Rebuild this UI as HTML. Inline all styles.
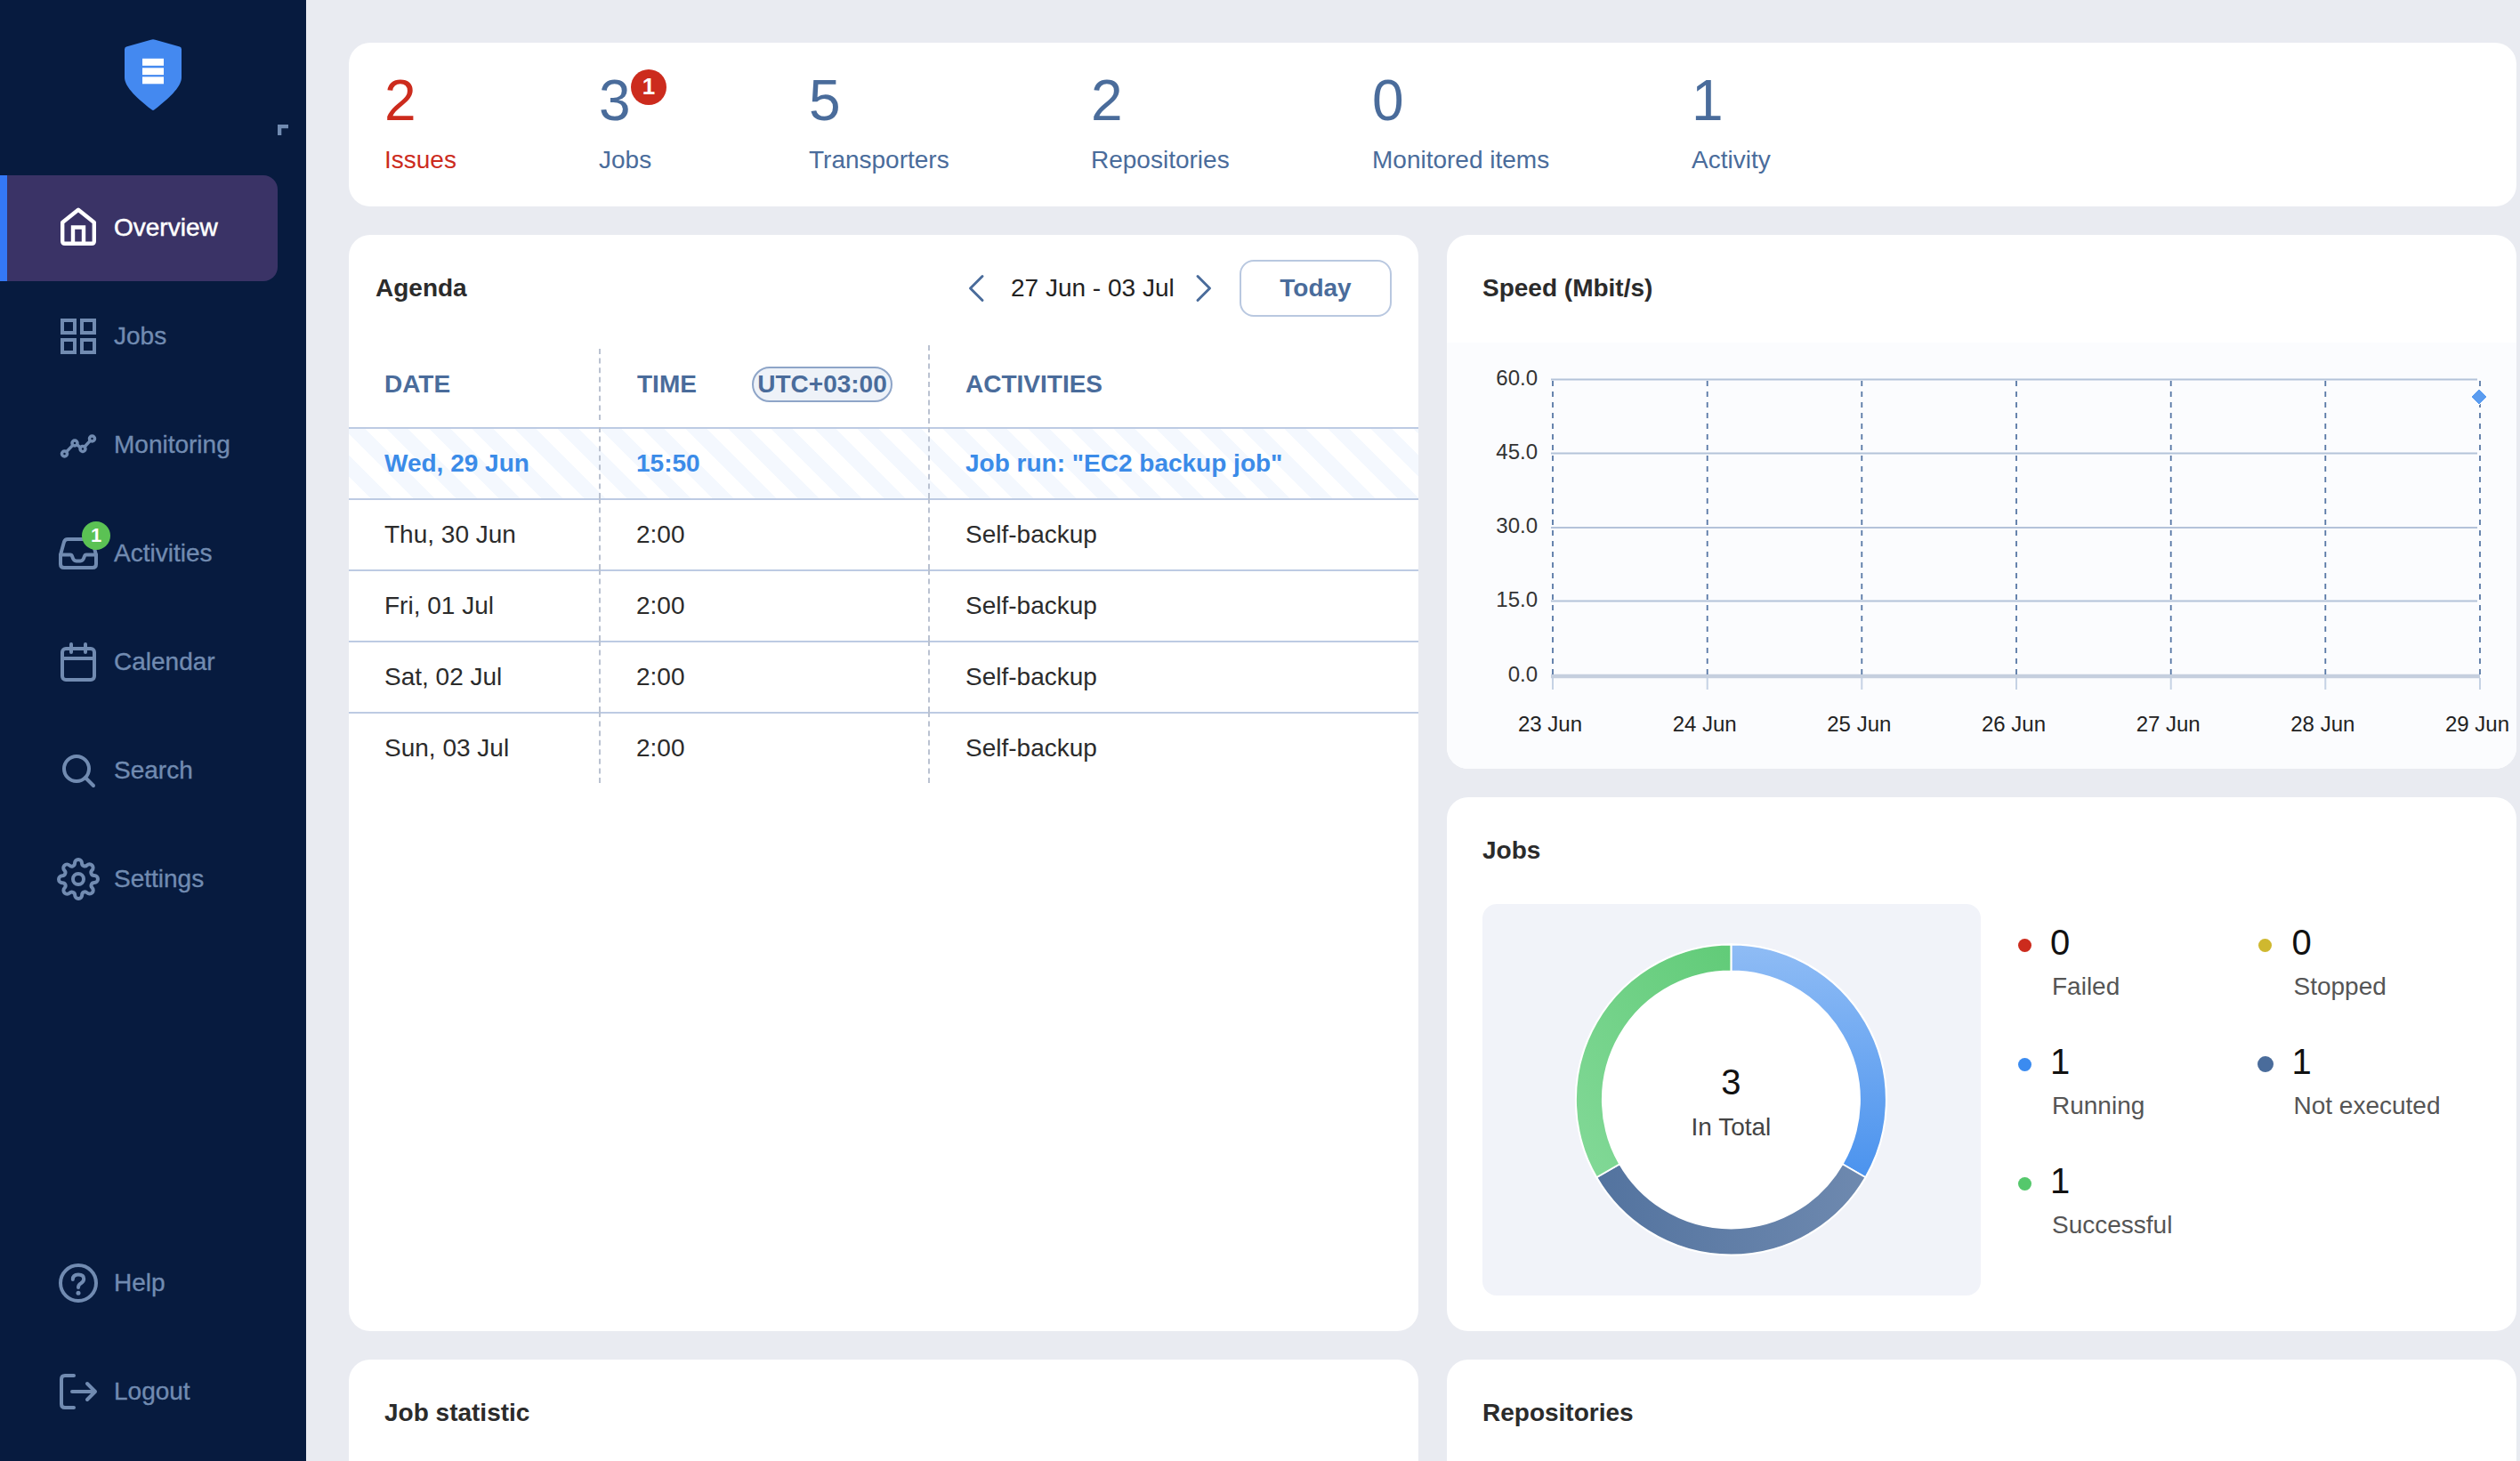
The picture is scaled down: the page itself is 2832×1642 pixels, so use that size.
<!DOCTYPE html>
<html lang="en">
<head>
<meta charset="utf-8">
<title>Overview</title>
<style>
*{box-sizing:border-box;margin:0;padding:0}
html,body{width:2832px;height:1642px;overflow:hidden}
body{background:#e9ebf1;font-family:"Liberation Sans",sans-serif;position:relative;color:#2b2b2b}
.abs{position:absolute}
.t{position:absolute;white-space:nowrap;line-height:1}
/* sidebar */
#side{position:absolute;left:0;top:0;width:344px;height:1642px;background:#071b3f}
#active{position:absolute;left:0;top:197px;width:312px;height:119px;background:#3a3366;border-radius:0 16px 16px 0}
#active:before{content:"";position:absolute;left:0;top:0;width:8px;height:100%;background:#3478f6}
.nav{position:absolute;left:128px;font-size:28px;line-height:1;color:#718bb1;white-space:nowrap;-webkit-text-stroke:0.35px #718bb1}
.nav.on{color:#fff;-webkit-text-stroke:0.5px #fff}
svg{position:absolute;overflow:visible}
.ic{fill:none;stroke:#718bb1;stroke-width:4;stroke-linecap:round;stroke-linejoin:round}
/* cards */
.card{position:absolute;background:#fff;border-radius:24px}
.h{position:absolute;font-weight:bold;font-size:28px;line-height:1;color:#2b2b2b;white-space:nowrap}
.num{position:absolute;font-size:64px;line-height:1;color:#4a6c9b;white-space:nowrap}
.lab{position:absolute;font-size:28px;line-height:1;color:#4a6c9b;white-space:nowrap}
.red{color:#cc2b1d}
.dv{position:absolute;width:0;border-left:2px dashed #bac2d1}
</style>
</head>
<body>
<!-- SIDEBAR -->
<div id="side">
  <div id="active"></div>
  <!-- logo shield -->
  <svg style="left:140px;top:44px" width="64" height="80" viewBox="0 0 64 80">
    <path d="M29.5 0.8 Q32 -0.3 34.5 0.8 L62 8.6 Q64 9.3 64 11.6 L64 43 C64 52 54 63.5 33.5 79.3 Q32 80.6 30.5 79.3 C10 63.5 0 52 0 43 L0 11.6 Q0 9.3 2 8.6 Z" fill="#4489f0"/>
    <rect x="20" y="21.8" width="24" height="8" fill="#fff"/>
    <rect x="20" y="32.3" width="24" height="7.8" fill="#fff"/>
    <rect x="20" y="42.3" width="24" height="8" fill="#fff"/>
  </svg>
  <!-- collapse corner -->
  <svg style="left:312px;top:140px" width="12" height="12" viewBox="0 0 12 12"><path d="M0 12V0H12V4.3H4.3V12Z" fill="#718bb1"/></svg>

  <!-- Overview -->
  <svg style="left:68px;top:233px" width="40" height="43" viewBox="0 0 40 43"><g class="ic" style="stroke:#fff;stroke-width:4.4">
    <path d="M2.2 17 L20 2.7 L37.8 17 V38 Q37.8 40.8 35 40.8 H5 Q2.2 40.8 2.2 38 Z"/><path d="M14 40.8 V22.5 H26 V40.8" style="stroke-linejoin:miter"/></g></svg>
  <div class="nav on" style="top:242px">Overview</div>
  <!-- Jobs -->
  <svg style="left:68px;top:358px" width="40" height="40" viewBox="0 0 40 40"><g class="ic" style="stroke-linejoin:miter">
    <rect x="2" y="2" width="14" height="14"/><rect x="24" y="2" width="14" height="14"/><rect x="2" y="24" width="14" height="14"/><rect x="24" y="24" width="14" height="14"/></g></svg>
  <div class="nav" style="top:364px">Jobs</div>
  <!-- Monitoring -->
  <svg style="left:68px;top:488px" width="40" height="27" viewBox="0 0 40 27"><g class="ic" style="stroke-width:3.5">
    <circle cx="4.5" cy="22" r="3"/><circle cx="16" cy="10" r="3"/><circle cx="25" cy="16.5" r="3"/><circle cx="35.5" cy="5" r="3"/>
    <path d="M6.8 19.6 L13.8 12.4 M18.6 11.8 L22.4 14.8 M27.2 14 L33.3 7.4"/></g></svg>
  <div class="nav" style="top:486px">Monitoring</div>
  <!-- Activities -->
  <svg style="left:66px;top:604px" width="44" height="36" viewBox="0 0 44 36"><g class="ic">
    <path d="M2 19.5 L6 5 Q7 2 10 2 H34 Q37 2 38 5 L42 19.5 V30 Q42 34 38 34 H6 Q2 34 2 30 Z"/>
    <path d="M2 19.5 H13 Q14.6 19.5 15.2 21.5 Q16.6 26.5 19.8 26.5 H24.2 Q27.4 26.5 28.8 21.5 Q29.4 19.5 31 19.5 H42"/></g></svg>
  <div class="abs" style="left:92px;top:586px;width:32px;height:32px;border-radius:50%;background:#5bc254"></div>
  <div class="t" style="left:92px;top:591px;width:32px;text-align:center;font-size:22px;font-weight:bold;color:#fff">1</div>
  <div class="nav" style="top:608px">Activities</div>
  <!-- Calendar -->
  <svg style="left:68px;top:722px" width="40" height="44" viewBox="0 0 40 44"><g class="ic">
    <rect x="2" y="7" width="36" height="35" rx="4"/><path d="M2 18 H38 M12 2 V11 M28 2 V11"/></g></svg>
  <div class="nav" style="top:730px">Calendar</div>
  <!-- Search -->
  <svg style="left:70px;top:848px" width="37" height="37" viewBox="0 0 37 37"><g class="ic">
    <circle cx="16" cy="16" r="14"/><path d="M26 26 L35 35"/></g></svg>
  <div class="nav" style="top:852px">Search</div>
  <!-- Settings -->
  <svg style="left:64px;top:964px" width="48" height="48" viewBox="0 0 24 24"><g class="ic" style="stroke-width:2">
    <circle cx="12" cy="12" r="3"/>
    <path d="M19.4 15a1.65 1.65 0 0 0 .33 1.82l.06.06a2 2 0 1 1-2.83 2.83l-.06-.06a1.65 1.65 0 0 0-1.82-.33 1.65 1.65 0 0 0-1 1.51V21a2 2 0 0 1-4 0v-.09A1.65 1.65 0 0 0 9 19.4a1.65 1.65 0 0 0-1.82.33l-.06.06a2 2 0 1 1-2.83-2.83l.06-.06a1.65 1.65 0 0 0 .33-1.82 1.65 1.65 0 0 0-1.51-1H3a2 2 0 0 1 0-4h.09A1.65 1.65 0 0 0 4.6 9a1.65 1.65 0 0 0-.33-1.82l-.06-.06a2 2 0 1 1 2.83-2.83l.06.06a1.65 1.65 0 0 0 1.82.33H9a1.65 1.65 0 0 0 1-1.51V3a2 2 0 0 1 4 0v.09a1.65 1.65 0 0 0 1 1.51 1.65 1.65 0 0 0 1.82-.33l.06-.06a2 2 0 1 1 2.83 2.83l-.06.06a1.65 1.65 0 0 0-.33 1.82V9a1.65 1.65 0 0 0 1.51 1H21a2 2 0 0 1 0 4h-.09a1.65 1.65 0 0 0-1.51 1z"/></g></svg>
  <div class="nav" style="top:974px">Settings</div>
  <!-- Help -->
  <svg style="left:66px;top:1420px" width="44" height="44" viewBox="0 0 44 44"><g class="ic">
    <circle cx="22" cy="22" r="20"/><path d="M15.8 18 Q15.8 12.5 22 12.5 Q28.2 12.5 28.2 17.3 Q28.2 20.2 25 22.2 Q22 23.8 22 27"/></g>
    <circle cx="22" cy="33.3" r="2.5" fill="#718bb1"/></svg>
  <div class="nav" style="top:1428px">Help</div>
  <!-- Logout -->
  <svg style="left:67px;top:1544px" width="43" height="40" viewBox="0 0 43 40"><g class="ic">
    <path d="M16 2 H6 Q2 2 2 6 V34 Q2 38 6 38 H16"/><path d="M14 20 H40 M31 11 L40 20 L31 29"/></g></svg>
  <div class="nav" style="top:1550px">Logout</div>
</div>

<!-- TOP STATS -->
<div class="card" id="stats" style="left:392px;top:48px;width:2436px;height:184px">
  <div class="num red" style="left:40px;top:33px">2</div>
  <div class="lab red" style="left:40px;top:118px">Issues</div>
  <div class="num" style="left:281px;top:33px">3</div>
  <div class="lab" style="left:281px;top:118px">Jobs</div>
  <div class="num" style="left:517px;top:33px">5</div>
  <div class="lab" style="left:517px;top:118px">Transporters</div>
  <div class="num" style="left:834px;top:33px">2</div>
  <div class="lab" style="left:834px;top:118px">Repositories</div>
  <div class="num" style="left:1150px;top:33px">0</div>
  <div class="lab" style="left:1150px;top:118px">Monitored items</div>
  <div class="num" style="left:1509px;top:33px">1</div>
  <div class="lab" style="left:1509px;top:118px">Activity</div>
  <div class="abs" style="left:317px;top:30px;width:40px;height:40px;border-radius:50%;background:#cc2b1d"></div>
  <div class="t" style="left:317px;top:36px;width:40px;text-align:center;font-size:26px;font-weight:bold;color:#fff">1</div>
</div>

<!-- AGENDA -->
<div class="card" id="agenda" style="left:392px;top:264px;width:1202px;height:1232px">
  <div class="h" style="left:30px;top:46px">Agenda</div>
  <svg style="left:696px;top:45px" width="18" height="30" viewBox="0 0 18 30"><path d="M16 1.5 L2.5 15 L16 28.5" fill="none" stroke="#4a6c9b" stroke-width="3" stroke-linecap="round" stroke-linejoin="round"/></svg>
  <div class="t" style="left:744px;top:46px;font-size:28px;color:#222">27 Jun - 03 Jul</div>
  <svg style="left:952px;top:45px" width="18" height="30" viewBox="0 0 18 30"><path d="M2 1.5 L15.5 15 L2 28.5" fill="none" stroke="#4a6c9b" stroke-width="3" stroke-linecap="round" stroke-linejoin="round"/></svg>
  <div class="abs" style="left:1001px;top:28px;width:171px;height:64px;border:2px solid #b9c8e0;border-radius:16px"></div>
  <div class="t" style="left:1001px;top:46px;width:171px;text-align:center;font-size:28px;font-weight:bold;color:#4a6c9b">Today</div>
  <div class="abs" style="left:0;top:218px;width:1202px;height:78px;background:repeating-linear-gradient(45deg,#fff 0 17px,#f4f8fe 17px 34px)"></div>
  <div class="t" style="left:40px;top:154px;font-size:28px;font-weight:bold;color:#4a6c9b">DATE</div>
  <div class="t" style="left:324px;top:154px;font-size:28px;font-weight:bold;color:#4a6c9b">TIME</div>
  <div class="t" style="left:693px;top:154px;font-size:28px;font-weight:bold;color:#4a6c9b">ACTIVITIES</div>
  <div class="abs" style="left:453px;top:148px;width:158px;height:40px;border:2px solid #8ea5c8;border-radius:20px;background:#eef2f8"></div>
  <div class="t" style="left:453px;top:154px;width:158px;text-align:center;font-size:28px;font-weight:bold;color:#4a6c9b">UTC+03:00</div>
  <div class="abs" style="left:0;top:216px;width:1202px;height:2px;background:#bdcbe3"></div>
  <div class="abs" style="left:0;top:296px;width:1202px;height:2px;background:#bdcbe3"></div>
  <div class="abs" style="left:0;top:376px;width:1202px;height:2px;background:#bdcbe3"></div>
  <div class="abs" style="left:0;top:456px;width:1202px;height:2px;background:#bdcbe3"></div>
  <div class="abs" style="left:0;top:536px;width:1202px;height:2px;background:#bdcbe3"></div>
  <div class="dv" style="left:281px;top:128px;height:80px"></div>
  <div class="dv" style="left:281px;top:216px;height:80px"></div>
  <div class="dv" style="left:281px;top:296px;height:80px"></div>
  <div class="dv" style="left:281px;top:376px;height:80px"></div>
  <div class="dv" style="left:281px;top:456px;height:80px"></div>
  <div class="dv" style="left:281px;top:536px;height:80px"></div>
  <div class="dv" style="left:651px;top:124px;height:88px"></div>
  <div class="dv" style="left:651px;top:216px;height:80px"></div>
  <div class="dv" style="left:651px;top:296px;height:80px"></div>
  <div class="dv" style="left:651px;top:376px;height:80px"></div>
  <div class="dv" style="left:651px;top:456px;height:80px"></div>
  <div class="dv" style="left:651px;top:536px;height:80px"></div>
  <div class="t" style="left:40px;top:243px;font-size:28px;font-weight:bold;color:#3b8be8">Wed, 29 Jun</div>
  <div class="t" style="left:323px;top:243px;font-size:28px;font-weight:bold;color:#3b8be8">15:50</div>
  <div class="t" style="left:693px;top:243px;font-size:28px;font-weight:bold;color:#3b8be8">Job run: "EC2 backup job"</div>
  <div class="t" style="left:40px;top:323px;font-size:28px;color:#2b2b2b">Thu, 30 Jun</div>
  <div class="t" style="left:323px;top:323px;font-size:28px;color:#2b2b2b">2:00</div>
  <div class="t" style="left:693px;top:323px;font-size:28px;color:#2b2b2b">Self-backup</div>
  <div class="t" style="left:40px;top:403px;font-size:28px;color:#2b2b2b">Fri, 01 Jul</div>
  <div class="t" style="left:323px;top:403px;font-size:28px;color:#2b2b2b">2:00</div>
  <div class="t" style="left:693px;top:403px;font-size:28px;color:#2b2b2b">Self-backup</div>
  <div class="t" style="left:40px;top:483px;font-size:28px;color:#2b2b2b">Sat, 02 Jul</div>
  <div class="t" style="left:323px;top:483px;font-size:28px;color:#2b2b2b">2:00</div>
  <div class="t" style="left:693px;top:483px;font-size:28px;color:#2b2b2b">Self-backup</div>
  <div class="t" style="left:40px;top:563px;font-size:28px;color:#2b2b2b">Sun, 03 Jul</div>
  <div class="t" style="left:323px;top:563px;font-size:28px;color:#2b2b2b">2:00</div>
  <div class="t" style="left:693px;top:563px;font-size:28px;color:#2b2b2b">Self-backup</div>
</div>

<!-- SPEED -->
<div class="card" id="speed" style="left:1626px;top:264px;width:1202px;height:600px">
  <div class="h" style="left:40px;top:46px">Speed (Mbit/s)</div>
  <div class="abs" style="left:0;top:121px;width:1202px;height:479px;background:#fbfcfe;border-radius:0 0 24px 24px"></div>
  <svg style="left:0;top:0" width="1202" height="600" viewBox="1626 264 1202 600">
    <line x1="1743" y1="426.5" x2="2784" y2="426.5" stroke="#b4c3d9" stroke-width="2"/>
    <line x1="1743" y1="509.5" x2="2784" y2="509.5" stroke="#b4c3d9" stroke-width="2"/>
    <line x1="1743" y1="593" x2="2784" y2="593" stroke="#b4c3d9" stroke-width="2"/>
    <line x1="1743" y1="675.5" x2="2784" y2="675.5" stroke="#b4c3d9" stroke-width="2"/>
    <line x1="1743" y1="760" x2="2787" y2="760" stroke="#c5cfde" stroke-width="4.5"/>
    <line x1="1745.0" y1="762" x2="1745.0" y2="775" stroke="#c5d2e4" stroke-width="2"/>
    <line x1="1745.0" y1="428" x2="1745.0" y2="758" stroke="#5777a5" stroke-width="1.8" stroke-dasharray="6 6"/>
    <line x1="1918.7" y1="762" x2="1918.7" y2="775" stroke="#c5d2e4" stroke-width="2"/>
    <line x1="1918.7" y1="428" x2="1918.7" y2="758" stroke="#5777a5" stroke-width="1.8" stroke-dasharray="6 6"/>
    <line x1="2092.3" y1="762" x2="2092.3" y2="775" stroke="#c5d2e4" stroke-width="2"/>
    <line x1="2092.3" y1="428" x2="2092.3" y2="758" stroke="#5777a5" stroke-width="1.8" stroke-dasharray="6 6"/>
    <line x1="2266.0" y1="762" x2="2266.0" y2="775" stroke="#c5d2e4" stroke-width="2"/>
    <line x1="2266.0" y1="428" x2="2266.0" y2="758" stroke="#5777a5" stroke-width="1.8" stroke-dasharray="6 6"/>
    <line x1="2439.7" y1="762" x2="2439.7" y2="775" stroke="#c5d2e4" stroke-width="2"/>
    <line x1="2439.7" y1="428" x2="2439.7" y2="758" stroke="#5777a5" stroke-width="1.8" stroke-dasharray="6 6"/>
    <line x1="2613.3" y1="762" x2="2613.3" y2="775" stroke="#c5d2e4" stroke-width="2"/>
    <line x1="2613.3" y1="428" x2="2613.3" y2="758" stroke="#5777a5" stroke-width="1.8" stroke-dasharray="6 6"/>
    <line x1="2787.0" y1="762" x2="2787.0" y2="775" stroke="#c5d2e4" stroke-width="2"/>
    <line x1="2787.0" y1="428" x2="2787.0" y2="758" stroke="#5777a5" stroke-width="1.8" stroke-dasharray="6 6"/>
    <path d="M2786 437 L2795 446 L2786 455 L2777 446 Z" fill="#5a9cf0" stroke="#fff" stroke-width="1"/>
    <text x="1728" y="432.5" text-anchor="end" font-size="24" fill="#333">60.0</text>
    <text x="1728" y="515.5" text-anchor="end" font-size="24" fill="#333">45.0</text>
    <text x="1728" y="599.0" text-anchor="end" font-size="24" fill="#333">30.0</text>
    <text x="1728" y="681.5" text-anchor="end" font-size="24" fill="#333">15.0</text>
    <text x="1728" y="766.0" text-anchor="end" font-size="24" fill="#333">0.0</text>
    <text x="1742.0" y="822" text-anchor="middle" font-size="24" fill="#222">23 Jun</text>
    <text x="1915.7" y="822" text-anchor="middle" font-size="24" fill="#222">24 Jun</text>
    <text x="2089.3" y="822" text-anchor="middle" font-size="24" fill="#222">25 Jun</text>
    <text x="2263.0" y="822" text-anchor="middle" font-size="24" fill="#222">26 Jun</text>
    <text x="2436.7" y="822" text-anchor="middle" font-size="24" fill="#222">27 Jun</text>
    <text x="2610.3" y="822" text-anchor="middle" font-size="24" fill="#222">28 Jun</text>
    <text x="2784.0" y="822" text-anchor="middle" font-size="24" fill="#222">29 Jun</text>
  </svg>
</div>

<!-- JOBS -->
<div class="card" id="jobs" style="left:1626px;top:896px;width:1202px;height:600px">
  <div class="h" style="left:40px;top:46px">Jobs</div>
  <div class="abs" style="left:40px;top:120px;width:560px;height:440px;background:#f1f3f9;border-radius:16px"></div>
  <svg style="left:0;top:0" width="1202" height="600" viewBox="1626 896 1202 600">
    <defs>
      <linearGradient id="gb" x1="0" y1="0" x2="0" y2="1"><stop offset="0" stop-color="#8fbcf5"/><stop offset="1" stop-color="#4b93ee"/></linearGradient>
      <linearGradient id="gg" x1="0" y1="1" x2="1" y2="0"><stop offset="0" stop-color="#83d998"/><stop offset="1" stop-color="#61cb78"/></linearGradient>
      <linearGradient id="gs" x1="0" y1="0" x2="1" y2="0"><stop offset="0" stop-color="#53739f"/><stop offset="1" stop-color="#6e89af"/></linearGradient>
    </defs>
    <circle cx="1945.4" cy="1236" r="175.5" fill="#fff"/>
    <path d="M1945.40 1061.50 A174.5 174.5 0 0 1 2096.52 1323.25 L2070.54 1308.25 A144.5 144.5 0 0 0 1945.40 1091.50 Z" fill="url(#gb)" stroke="#fff" stroke-width="2"/>
    <path d="M2096.52 1323.25 A174.5 174.5 0 0 1 1794.28 1323.25 L1820.26 1308.25 A144.5 144.5 0 0 0 2070.54 1308.25 Z" fill="url(#gs)" stroke="#fff" stroke-width="2"/>
    <path d="M1794.28 1323.25 A174.5 174.5 0 0 1 1945.40 1061.50 L1945.40 1091.50 A144.5 144.5 0 0 0 1820.26 1308.25 Z" fill="url(#gg)" stroke="#fff" stroke-width="2"/>
    <text x="1945.4" y="1230" text-anchor="middle" font-size="40" fill="#111">3</text>
    <text x="1945.4" y="1275.5" text-anchor="middle" font-size="28" fill="#444">In Total</text>
  </svg>
  <div class="abs" style="left:641.5px;top:158.5px;width:15.0px;height:15.0px;border-radius:50%;background:#cc2b1d"></div>
  <div class="t" style="left:678px;top:143px;font-size:40px;color:#111">0</div>
  <div class="t" style="left:680px;top:199px;font-size:28px;color:#555">Failed</div>
  <div class="abs" style="left:912.0px;top:158.5px;width:15.0px;height:15.0px;border-radius:50%;background:#cfb82f"></div>
  <div class="t" style="left:949.5px;top:143px;font-size:40px;color:#111">0</div>
  <div class="t" style="left:951.5px;top:199px;font-size:28px;color:#555">Stopped</div>
  <div class="abs" style="left:641.5px;top:292.5px;width:15.0px;height:15.0px;border-radius:50%;background:#3b8bf0"></div>
  <div class="t" style="left:678px;top:277px;font-size:40px;color:#111">1</div>
  <div class="t" style="left:680px;top:333px;font-size:28px;color:#555">Running</div>
  <div class="abs" style="left:910.5px;top:291px;width:18px;height:18px;border-radius:50%;background:#4a6c9b"></div>
  <div class="t" style="left:949.5px;top:277px;font-size:40px;color:#111">1</div>
  <div class="t" style="left:951.5px;top:333px;font-size:28px;color:#555">Not executed</div>
  <div class="abs" style="left:641.5px;top:426.5px;width:15.0px;height:15.0px;border-radius:50%;background:#55c86c"></div>
  <div class="t" style="left:678px;top:411px;font-size:40px;color:#111">1</div>
  <div class="t" style="left:680px;top:467px;font-size:28px;color:#555">Successful</div>
</div>

<!-- BOTTOM -->
<div class="card" id="jobstat" style="left:392px;top:1528px;width:1202px;height:200px">
  <div class="h" style="left:40px;top:46px">Job statistic</div>
</div>
<div class="card" id="repos" style="left:1626px;top:1528px;width:1202px;height:200px">
  <div class="h" style="left:40px;top:46px">Repositories</div>
</div>
</body>
</html>
